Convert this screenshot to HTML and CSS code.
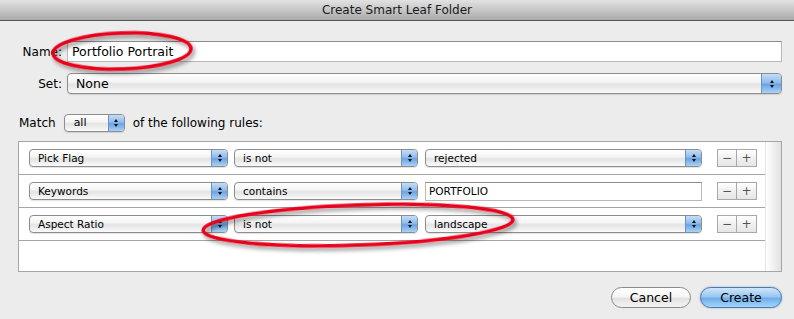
FILE: index.html
```html
<!DOCTYPE html>
<html lang="en">
<head>
  <meta charset="UTF-8">
  <title>Create Smart Leaf Folder</title>
  <link rel="stylesheet" href="styles.css">
</head>
<body>
  <div class="window">
    <!-- Title bar -->
    <div class="titlebar">Create Smart Leaf Folder</div>

    <div class="content">
      <div class="field-row">
        <label class="field-label">Name:</label>
        <div class="textbox name-box">Portfolio Portrait</div>
      </div>

      <div class="field-row set-row">
        <label class="field-label">Set:</label>
        <div class="popup popup-large">
          <span class="popup-text">None</span>
          <span class="popup-arrows"><i class="up"></i><i class="down"></i></span>
        </div>
      </div>

      <div class="match-row">
        <span>Match</span>
        <div class="popup popup-all">
          <span class="popup-text">all</span>
          <span class="popup-arrows"><i class="up"></i><i class="down"></i></span>
        </div>
        <span>of the following rules:</span>
      </div>

      <!-- Rules list -->
      <div class="rules">
        <div class="rules-list">
          <div class="rule">
            <div class="popup popup-field"><span class="popup-text">Pick Flag</span><span class="popup-arrows"><i class="up"></i><i class="down"></i></span></div>
            <div class="popup popup-op"><span class="popup-text">is not</span><span class="popup-arrows"><i class="up"></i><i class="down"></i></span></div>
            <div class="popup popup-value"><span class="popup-text">rejected</span><span class="popup-arrows"><i class="up"></i><i class="down"></i></span></div>
            <div class="stepper"><span>&minus;</span><span>+</span></div>
          </div>
          <div class="rule">
            <div class="popup popup-field"><span class="popup-text">Keywords</span><span class="popup-arrows"><i class="up"></i><i class="down"></i></span></div>
            <div class="popup popup-op"><span class="popup-text">contains</span><span class="popup-arrows"><i class="up"></i><i class="down"></i></span></div>
            <div class="textbox value-box">PORTFOLIO</div>
            <div class="stepper"><span>&minus;</span><span>+</span></div>
          </div>
          <div class="rule">
            <div class="popup popup-field"><span class="popup-text">Aspect Ratio</span><span class="popup-arrows"><i class="up"></i><i class="down"></i></span></div>
            <div class="popup popup-op"><span class="popup-text">is not</span><span class="popup-arrows"><i class="up"></i><i class="down"></i></span></div>
            <div class="popup popup-value"><span class="popup-text">landscape</span><span class="popup-arrows"><i class="up"></i><i class="down"></i></span></div>
            <div class="stepper"><span>&minus;</span><span>+</span></div>
          </div>
        </div>
        <div class="scroll-track"></div>
      </div>

      <div class="buttons">
        <button class="btn btn-cancel">Cancel</button>
        <button class="btn btn-create">Create</button>
      </div>
    </div>

    <!-- Red marker ellipses drawn over the dialog -->
    <svg class="marks" width="794" height="319" viewBox="0 0 794 319">
      <defs>
        <filter id="shadow" x="-20%" y="-50%" width="140%" height="200%">
          <feDropShadow dx="2" dy="3" stdDeviation="2" flood-color="#000" flood-opacity="0.45"/>
        </filter>
      </defs>
      <ellipse cx="122" cy="51" rx="69" ry="18" transform="rotate(-2 122 51)" fill="none" stroke="#e8001a" stroke-width="3.5" filter="url(#shadow)"/>
      <ellipse cx="358" cy="225" rx="155" ry="20" transform="rotate(-2 358 225)" fill="none" stroke="#e8001a" stroke-width="3.5" filter="url(#shadow)"/>
    </svg>
  </div>
</body>
</html>
```

FILE: styles.css
```css
body {
  margin: 0;
  padding: 0;
  background: #ececec;
  font-family: "DejaVu Sans", "Noto Sans", sans-serif;
  font-size: 12px;
  color: #000;
}

.window {
  position: relative;
  width: 794px;
  height: 319px;
  background: #ececec;
  overflow: hidden;
}

.titlebar {
  height: 20px;
  line-height: 20px;
  text-align: center;
  font-size: 12px;
  color: #1a1a1a;
  background: linear-gradient(#e2e2e2, #c6c6c6 50%, #a9a9a9);
  border-bottom: 1px solid #555;
}

.content {
  padding: 20px 12px 0 18px;
}

/* Name / Set rows */
.field-row {
  display: flex;
  align-items: center;
  gap: 5px;
}

.set-row {
  margin-top: 11px;
}

.field-label {
  width: 44px;
  text-align: right;
  font-size: 12px;
}

.textbox {
  box-sizing: border-box;
  background: #fff;
  border: 1px solid #b8b8b8;
  border-top-color: #8c8c8c;
}

.name-box {
  flex: 1;
  height: 21px;
  line-height: 19px;
  padding-left: 4px;
  font-size: 12.5px;
}

/* Aqua style popup */
.popup {
  box-sizing: border-box;
  display: flex;
  align-items: stretch;
  border: 1px solid #8d8d8d;
  border-radius: 4px;
  background: linear-gradient(#ffffff, #f5f5f5 40%, #e4e4e4 55%, #efefef 80%, #fbfbfb);
  box-shadow: 0 1px 1px rgba(0, 0, 0, 0.12);
  overflow: hidden;
}

.popup-text {
  flex: 1;
  padding-left: 8px;
  white-space: nowrap;
}

.popup-arrows {
  width: 15px;
  display: flex;
  flex-direction: column;
  align-items: center;
  justify-content: center;
  gap: 2px;
  border-left: 1px solid #6f93c0;
  background: linear-gradient(#c6ddf6, #8ebcec 45%, #6aa3e2 55%, #a9d2f7);
}

.popup-arrows i {
  width: 0;
  height: 0;
  border-left: 2.5px solid transparent;
  border-right: 2.5px solid transparent;
}

.popup-arrows .up {
  border-bottom: 3px solid #111;
}

.popup-arrows .down {
  border-top: 3px solid #111;
}

.popup-large {
  flex: 1;
  height: 21px;
  line-height: 19px;
  font-size: 12.5px;
}

.popup-large .popup-arrows {
  width: 19px;
}

/* Match row */
.match-row {
  display: flex;
  align-items: center;
  gap: 8px;
  margin-top: 20px;
  padding-left: 1px;
}

.popup-all {
  width: 61px;
  height: 18px;
  line-height: 16px;
  font-size: 11px;
}

.popup-all .popup-text {
  padding-left: 9px;
}

/* Rules list */
.rules {
  display: flex;
  margin-top: 9px;
  height: 129px;
  border: 1px solid #a5a5a5;
  background: #fff;
}

.rules-list {
  flex: 1;
}

.rule {
  display: flex;
  align-items: center;
  height: 32px;
  padding-left: 10px;
  border-bottom: 1px solid #a5a5a5;
  font-size: 10.5px;
}

.rule .popup {
  height: 18px;
  line-height: 16px;
}

.popup-field {
  width: 199px;
}

.popup-op {
  width: 184px;
  margin-left: 6px;
}

.popup-value {
  width: 277px;
  margin-left: 7px;
}

.value-box {
  width: 277px;
  height: 19px;
  line-height: 17px;
  margin-left: 7px;
  padding-left: 3px;
}

.stepper {
  display: flex;
  margin-left: 15px;
}

.stepper span {
  box-sizing: border-box;
  width: 20px;
  height: 18px;
  line-height: 16px;
  text-align: center;
  color: #555;
  font-size: 12px;
  border: 1px solid #a8a8a8;
  background: linear-gradient(#ffffff, #f0f0f0 50%, #e6e6e6);
}

.stepper span + span {
  border-left: none;
}

.scroll-track {
  width: 15px;
  background: linear-gradient(90deg, #ffffff, #f3f3f3 40%, #e2e2e2);
  border-left: 1px solid #e4e4e4;
}

/* Dialog buttons */
.buttons {
  display: flex;
  justify-content: flex-end;
  gap: 9px;
  margin-top: 15px;
}

.btn {
  height: 21px;
  padding: 0;
  font-family: inherit;
  font-size: 12.5px;
  color: #000;
  border-radius: 11px;
  line-height: 19px;
}

.btn-cancel {
  width: 80px;
  border: 1px solid #8a8a8a;
  background: linear-gradient(#ffffff, #f6f6f6 45%, #e2e2e2 55%, #f4f4f4);
}

.btn-create {
  width: 82px;
  border: 1px solid #4d77ad;
  background: linear-gradient(#cfe6fb, #9ac7f1 45%, #6eaee9 55%, #a6d6fb);
  box-shadow: 0 0 2px rgba(60, 110, 180, 0.6);
}

.marks {
  position: absolute;
  left: 0;
  top: 0;
  pointer-events: none;
}
```
